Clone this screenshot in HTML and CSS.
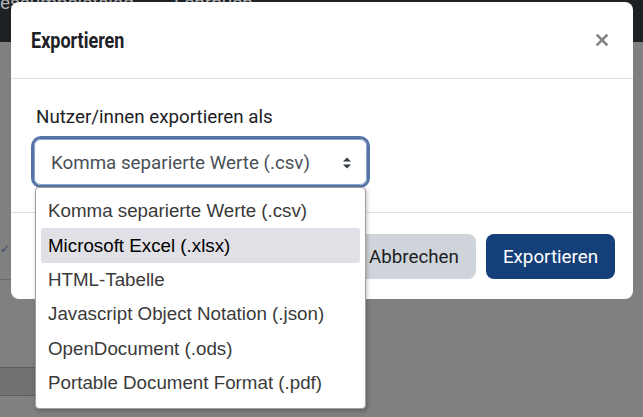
FILE: index.html
```html
<!DOCTYPE html>
<html lang="de">
<head>
<meta charset="utf-8">
<link rel="stylesheet" href="styles.css">
</head>
<body>
<div class="navbar"><span class="nav-text">essumpeletslag</span><span class="nav-text">Lehrbuch</span></div>
<div class="page">
  <div class="check">✓</div>
  <div class="rule"></div>
  <div class="band"></div>
</div>

<div class="modal">
  <div class="modal-header">
    <h5 class="modal-title">Exportieren</h5>
    <svg class="close" width="12" height="12" viewBox="0 0 12 12"><path d="M1.5 1.5 L10.5 10.5 M10.5 1.5 L1.5 10.5" stroke="#858585" stroke-width="2.6" stroke-linecap="square"/></svg>
  </div>
  <div class="modal-body">
    <label class="label">Nutzer/innen exportieren als</label>
    <div class="select">
      <span>Komma separierte Werte (.csv)</span>
      <svg class="arrows" width="10" height="14" viewBox="0 0 10 14"><path d="M1 5.5 L5 1.5 L9 5.5 Z M1 8.5 L5 12.5 L9 8.5 Z" fill="#343a40"/></svg>
    </div>
  </div>
  <div class="modal-footer">
    <button class="btn btn-secondary">Abbrechen</button>
    <button class="btn btn-primary">Exportieren</button>
  </div>
</div>

<ul class="dropdown">
  <li>Komma separierte Werte (.csv)</li>
  <li class="active">Microsoft Excel (.xlsx)</li>
  <li>HTML-Tabelle</li>
  <li>Javascript Object Notation (.json)</li>
  <li>OpenDocument (.ods)</li>
  <li>Portable Document Format (.pdf)</li>
</ul>
</body>
</html>
```
FILE: styles.css
```css
html, body {
  margin: 0;
  padding: 0;
  height: 100%;
}
body {
  background: #808080;
  font-family: Roboto, "Liberation Sans", sans-serif;
  overflow: hidden;
  position: relative;
}
.navbar {
  height: 42px;
  background: #1e2124;
  display: flex;
  gap: 40px;
  padding-left: 0;
}
.nav-text {
  color: #b0b2b4;
  font-size: 19px;
  line-height: 19px;
  margin-top: -7px;
}
.page {
  position: relative;
  height: 375px;
}
.check {
  position: absolute;
  left: 0;
  top: 200px;
  color: #3b4d6b;
  font-size: 12px;
}
.rule {
  position: absolute;
  left: 0;
  top: 237px;
  width: 20px;
  height: 1px;
  background: #6a6a6a;
}
.band {
  position: absolute;
  left: 0;
  top: 325px;
  width: 40px;
  height: 27px;
  background: #727272;
  border-top: 1px solid #5e5e5e;
  border-bottom: 1px solid #5e5e5e;
}
.modal {
  position: absolute;
  left: 11px;
  top: 2px;
  width: 622px;
  background: #fff;
  border-radius: 8px;
}
.modal-header {
  height: 76px;
  display: flex;
  align-items: center;
  justify-content: space-between;
  padding: 0 25px 0 20px;
  border-bottom: 1px solid #dee2e6;
}
.modal-title {
  margin: 0;
  font-size: 22.5px;
  font-weight: 700;
  color: #1d2125;
  transform: scaleX(0.8);
  transform-origin: left center;
}
.close {
  display: block;
}
.modal-body {
  height: 133px;
  box-sizing: border-box;
  padding: 27px 0 0 25px;
}
.label {
  display: block;
  font-size: 18.75px;
  color: #1d2125;
  margin-bottom: 11px;
  line-height: 22px;
}
.select {
  box-sizing: border-box;
  width: 333px;
  height: 46px;
  margin-left: -2px;
  border: 1px solid #8fa5c8;
  border-radius: 7px;
  box-shadow: 0 0 0 3px #5574a6;
  display: flex;
  align-items: center;
  justify-content: space-between;
  padding: 2px 14px 0 16px;
  font-size: 18.75px;
  color: #495057;
}
.modal-footer {
  border-top: 1px solid #dee2e6;
  display: flex;
  justify-content: flex-end;
  gap: 10px;
  padding: 21px 18px 20px 0;
}
.btn {
  font-family: Roboto, sans-serif;
  font-size: 18.75px;
  height: 45px;
  border: none;
  border-radius: 8px;
  padding: 0 17px;
}
.btn-secondary {
  background: #ced4da;
  color: #1d2125;
}
.btn-primary {
  background: #153f78;
  color: #fff;
}
.dropdown {
  position: absolute;
  left: 35px;
  top: 187px;
  width: 331px;
  box-sizing: border-box;
  margin: 0;
  padding: 6px 5px 8px;
  list-style: none;
  background: #fff;
  border: 1px solid #a0a0a0;
  border-radius: 4px;
  box-shadow: 1px 2px 4px rgba(0,0,0,0.25);
  font-family: "Liberation Sans", Arial, sans-serif;
}
.dropdown li {
  height: 34.4px;
  display: flex;
  align-items: center;
  padding-left: 7px;
  font-size: 18.75px;
  color: #3a3a3a;
  border-radius: 3px;
}
.dropdown li.active {
  background: #e0e0e6;
  color: #000;
}
```
